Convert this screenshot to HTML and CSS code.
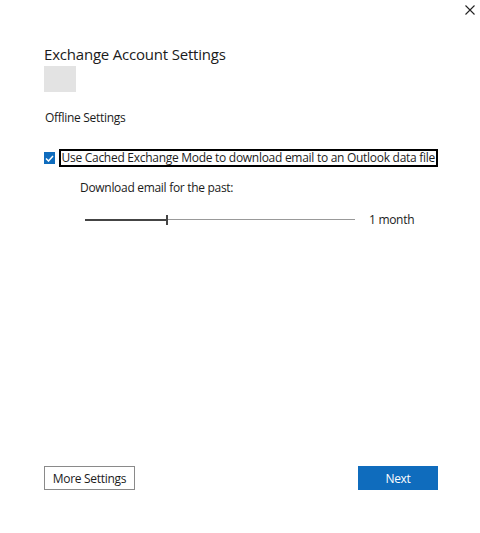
FILE: index.html
```html
<!DOCTYPE html>
<html lang="en">
<head>
    <meta charset="UTF-8">
    <meta name="viewport" content="width=device-width, initial-scale=1.0">
    <title>Exchange Account Settings</title>
    <link rel="stylesheet" href="styles.css">
</head>
<body>
    <div class="dialog">
        <div class="title-bar">
            <button class="close-btn" aria-label="Close">
                <svg width="10" height="10" viewBox="0 0 10 10">
                    <path d="M0.5 0.5 L9.5 9.5 M9.5 0.5 L0.5 9.5" stroke="#222" stroke-width="1.1" fill="none"/>
                </svg>
            </button>
        </div>
        <div class="content">
            <h1 class="dialog-title">Exchange Account Settings</h1>
            <div class="account-picture"></div>
            <div class="section-label">Offline Settings</div>

            <label class="check-row">
                <span class="checkbox">
                    <svg width="9" height="7" viewBox="0 0 9 7">
                        <path d="M1 3.5 L3.5 6 L8 1" stroke="#fff" stroke-width="1.5" fill="none"/>
                    </svg>
                </span>
                <span class="check-text">Use Cached Exchange Mode to download email to an Outlook data file</span>
            </label>

            <div class="download-group">
                <div class="download-label">Download email for the past:</div>
                <div class="slider-row">
                    <div class="slider">
                        <div class="slider-fill" style="width: 81px"></div>
                        <div class="slider-thumb"></div>
                        <div class="slider-rest"></div>
                    </div>
                    <span class="slider-value">1 month</span>
                </div>
            </div>
        </div>
        <div class="footer">
            <button class="btn btn-secondary">More Settings</button>
            <button class="btn btn-primary">Next</button>
        </div>
    </div>
</body>
</html>
```

FILE: styles.css
```css
* {
    margin: 0;
    padding: 0;
    box-sizing: border-box;
}

body {
    font-family: 'Open Sans', 'Noto Sans', sans-serif;
    background-color: white;
    color: #1b1b1b;
}

.dialog {
    width: 480px;
    height: 533px;
    display: flex;
    flex-direction: column;
}

.title-bar {
    display: flex;
    justify-content: flex-end;
    padding: 5px 5px 0 0;
    height: 44px;
}

.close-btn {
    width: 10px;
    height: 10px;
    border: none;
    background: none;
    display: flex;
}

.content {
    flex: 1;
    padding: 0 42px 0 44px;
}

.dialog-title {
    font-size: 15px;
    font-weight: 500;
    line-height: 20px;
    color: #1b1b1b;
    letter-spacing: -0.2px;
}

.account-picture {
    width: 32px;
    height: 26px;
    background-color: #e3e3e3;
    margin-top: 2px;
}

.section-label {
    font-size: 12px;
    line-height: 16px;
    margin-top: 18px;
    margin-left: 1px;
    letter-spacing: -0.3px;
}

.check-row {
    display: flex;
    align-items: center;
    gap: 4px;
    margin-top: 23px;
}

.checkbox {
    width: 12px;
    height: 12px;
    background-color: #0f6cbd;
    display: flex;
    align-items: center;
    justify-content: center;
}

.check-text {
    font-size: 12px;
    line-height: 14px;
    border: 2px solid black;
    padding: 0 1px;
    letter-spacing: -0.28px;
    white-space: nowrap;
}

.download-group {
    padding-left: 36px;
    margin-top: 13px;
}

.download-label {
    font-size: 12px;
    line-height: 16px;
    letter-spacing: -0.3px;
}

.slider-row {
    display: flex;
    align-items: center;
    margin-top: 15px;
    margin-left: 5px;
}

.slider {
    width: 270px;
    height: 10px;
    display: flex;
    align-items: center;
}

.slider-fill {
    height: 2px;
    background-color: #444;
}

.slider-thumb {
    width: 2px;
    height: 10px;
    background-color: #444;
}

.slider-rest {
    flex: 1;
    height: 1px;
    background-color: #999;
}

.slider-value {
    font-size: 12px;
    margin-left: 14px;
    letter-spacing: -0.3px;
}

.footer {
    display: flex;
    justify-content: space-between;
    padding: 0 42px 43px 44px;
}

.btn {
    font-family: 'Open Sans', 'Noto Sans', sans-serif;
    font-size: 12px;
    height: 24px;
    letter-spacing: -0.3px;
}

.btn-secondary {
    width: 91px;
    background-color: white;
    border: 1px solid #8a8a8a;
    color: #1b1b1b;
}

.btn-primary {
    width: 80px;
    background-color: #0f6cbd;
    border: 1px solid #0f6cbd;
    color: white;
}
```
